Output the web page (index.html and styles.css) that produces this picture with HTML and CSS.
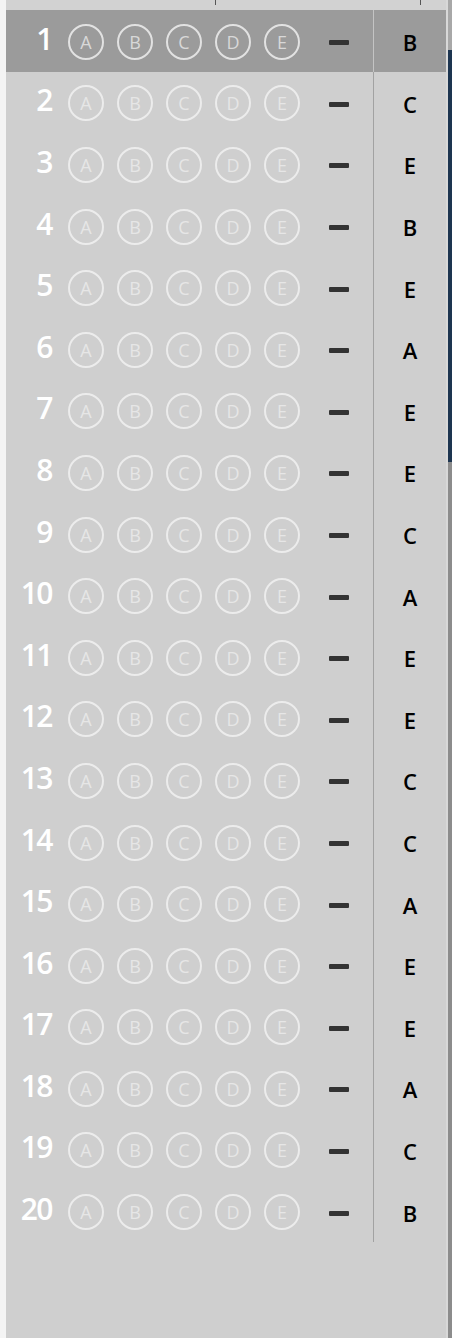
FILE: index.html
```html
<!DOCTYPE html>
<html>
<head>
<meta charset="utf-8">
<link rel="stylesheet" href="styles.css">
</head>
<body>
<div class="frame">
  <div class="edge"></div>
  <div class="panel">
    <div class="topbar"><span class="tick tick-a"></span><span class="tick tick-b"></span></div>
    <div class="sheet" id="sheet">
      <div class="row active"><div class="num">1</div><div class="opts"><span class="opt">A</span><span class="opt">B</span><span class="opt">C</span><span class="opt">D</span><span class="opt">E</span></div><div class="dash"></div><div class="ans">B</div></div>
      <div class="row"><div class="num">2</div><div class="opts"><span class="opt">A</span><span class="opt">B</span><span class="opt">C</span><span class="opt">D</span><span class="opt">E</span></div><div class="dash"></div><div class="ans">C</div></div>
      <div class="row"><div class="num">3</div><div class="opts"><span class="opt">A</span><span class="opt">B</span><span class="opt">C</span><span class="opt">D</span><span class="opt">E</span></div><div class="dash"></div><div class="ans">E</div></div>
      <div class="row"><div class="num">4</div><div class="opts"><span class="opt">A</span><span class="opt">B</span><span class="opt">C</span><span class="opt">D</span><span class="opt">E</span></div><div class="dash"></div><div class="ans">B</div></div>
      <div class="row"><div class="num">5</div><div class="opts"><span class="opt">A</span><span class="opt">B</span><span class="opt">C</span><span class="opt">D</span><span class="opt">E</span></div><div class="dash"></div><div class="ans">E</div></div>
      <div class="row"><div class="num">6</div><div class="opts"><span class="opt">A</span><span class="opt">B</span><span class="opt">C</span><span class="opt">D</span><span class="opt">E</span></div><div class="dash"></div><div class="ans">A</div></div>
      <div class="row"><div class="num">7</div><div class="opts"><span class="opt">A</span><span class="opt">B</span><span class="opt">C</span><span class="opt">D</span><span class="opt">E</span></div><div class="dash"></div><div class="ans">E</div></div>
      <div class="row"><div class="num">8</div><div class="opts"><span class="opt">A</span><span class="opt">B</span><span class="opt">C</span><span class="opt">D</span><span class="opt">E</span></div><div class="dash"></div><div class="ans">E</div></div>
      <div class="row"><div class="num">9</div><div class="opts"><span class="opt">A</span><span class="opt">B</span><span class="opt">C</span><span class="opt">D</span><span class="opt">E</span></div><div class="dash"></div><div class="ans">C</div></div>
      <div class="row"><div class="num">10</div><div class="opts"><span class="opt">A</span><span class="opt">B</span><span class="opt">C</span><span class="opt">D</span><span class="opt">E</span></div><div class="dash"></div><div class="ans">A</div></div>
      <div class="row"><div class="num">11</div><div class="opts"><span class="opt">A</span><span class="opt">B</span><span class="opt">C</span><span class="opt">D</span><span class="opt">E</span></div><div class="dash"></div><div class="ans">E</div></div>
      <div class="row"><div class="num">12</div><div class="opts"><span class="opt">A</span><span class="opt">B</span><span class="opt">C</span><span class="opt">D</span><span class="opt">E</span></div><div class="dash"></div><div class="ans">E</div></div>
      <div class="row"><div class="num">13</div><div class="opts"><span class="opt">A</span><span class="opt">B</span><span class="opt">C</span><span class="opt">D</span><span class="opt">E</span></div><div class="dash"></div><div class="ans">C</div></div>
      <div class="row"><div class="num">14</div><div class="opts"><span class="opt">A</span><span class="opt">B</span><span class="opt">C</span><span class="opt">D</span><span class="opt">E</span></div><div class="dash"></div><div class="ans">C</div></div>
      <div class="row"><div class="num">15</div><div class="opts"><span class="opt">A</span><span class="opt">B</span><span class="opt">C</span><span class="opt">D</span><span class="opt">E</span></div><div class="dash"></div><div class="ans">A</div></div>
      <div class="row"><div class="num">16</div><div class="opts"><span class="opt">A</span><span class="opt">B</span><span class="opt">C</span><span class="opt">D</span><span class="opt">E</span></div><div class="dash"></div><div class="ans">E</div></div>
      <div class="row"><div class="num">17</div><div class="opts"><span class="opt">A</span><span class="opt">B</span><span class="opt">C</span><span class="opt">D</span><span class="opt">E</span></div><div class="dash"></div><div class="ans">E</div></div>
      <div class="row"><div class="num">18</div><div class="opts"><span class="opt">A</span><span class="opt">B</span><span class="opt">C</span><span class="opt">D</span><span class="opt">E</span></div><div class="dash"></div><div class="ans">A</div></div>
      <div class="row"><div class="num">19</div><div class="opts"><span class="opt">A</span><span class="opt">B</span><span class="opt">C</span><span class="opt">D</span><span class="opt">E</span></div><div class="dash"></div><div class="ans">C</div></div>
      <div class="row"><div class="num">20</div><div class="opts"><span class="opt">A</span><span class="opt">B</span><span class="opt">C</span><span class="opt">D</span><span class="opt">E</span></div><div class="dash"></div><div class="ans">B</div></div>
    </div>
  </div>
  <div class="scrollbar"><div class="scroll-top"></div><div class="thumb"></div><div class="scroll-rest"></div></div>
</div>
</body>
</html>
```
FILE: styles.css
```css
html, body {
  margin: 0;
  padding: 0;
  background: #cfcfcf;
}
.frame {
  display: flex;
  width: 452px;
  height: 1338px;
  overflow: hidden;
}
.edge {
  width: 6px;
  background: #f4f4f4;
  flex: none;
}
.panel {
  flex: 1;
  background: #cfcfcf;
  display: flex;
  flex-direction: column;
}
.topbar {
  height: 10px;
  position: relative;
  background: #d2d2d2;
}
.tick {
  position: absolute;
  top: 0;
  width: 1px;
  height: 5px;
  background: #555;
}
.tick-a { left: 209px; }
.tick-b { left: 414px; }
.sheet {
  display: flex;
  flex-direction: column;
}
.row {
  height: 61.6px;
  display: grid;
  grid-template-columns: 46px 232px 89px 1px 72px;
  align-items: center;
}
.row::after {
  content: "";
  grid-column: 4;
  grid-row: 1;
  align-self: stretch;
  background: #a2a2a2;
}
.row.active {
  background: #9b9b9b;
}
.row.active::after {
  background: #c4c4c4;
}
.num {
  grid-column: 1;
  grid-row: 1;
  text-align: right;
  font-family: "Open Sans", "Noto Sans", sans-serif;
  font-weight: 600;
  font-size: 30px;
  line-height: 1;
  color: #ffffff;
  letter-spacing: -1.5px;
  padding-bottom: 4px;
}
.opts {
  grid-column: 2;
  grid-row: 1;
  display: flex;
  gap: 13px;
  padding-left: 16px;
  padding-top: 2px;
}
.opt {
  box-sizing: border-box;
  width: 36px;
  height: 36px;
  border: 2px solid #ececec;
  border-radius: 50%;
  display: flex;
  align-items: center;
  justify-content: center;
  font-family: "Open Sans", "Noto Sans", sans-serif;
  font-size: 18px;
  font-weight: 400;
  color: #e6e6e6;
  flex: none;
}
.row.active .opt {
  border-color: #e2e2e2;
  color: #d8d8d8;
}
.dash {
  grid-column: 3;
  grid-row: 1;
  width: 20px;
  height: 5px;
  background: #333;
  border-radius: 1px;
  margin-left: 45px;
  margin-top: 4px;
}
.ans {
  grid-column: 5;
  grid-row: 1;
  text-align: center;
  font-family: "Open Sans", "Noto Sans", sans-serif;
  font-weight: 600;
  font-size: 22px;
  color: #000;
  padding-top: 3px;
}
.scrollbar {
  width: 6px;
  flex: none;
  display: flex;
  flex-direction: column;
  background: #8c8c8c;
  border-left: 2px solid #d8d8d8;
  box-sizing: border-box;
}
.scroll-top {
  height: 50px;
  background: #a8a8a8;
}
.thumb {
  height: 412px;
  background: #1d3550;
}
.scroll-rest {
  flex: 1;
  background: #8c8c8c;
}
```
